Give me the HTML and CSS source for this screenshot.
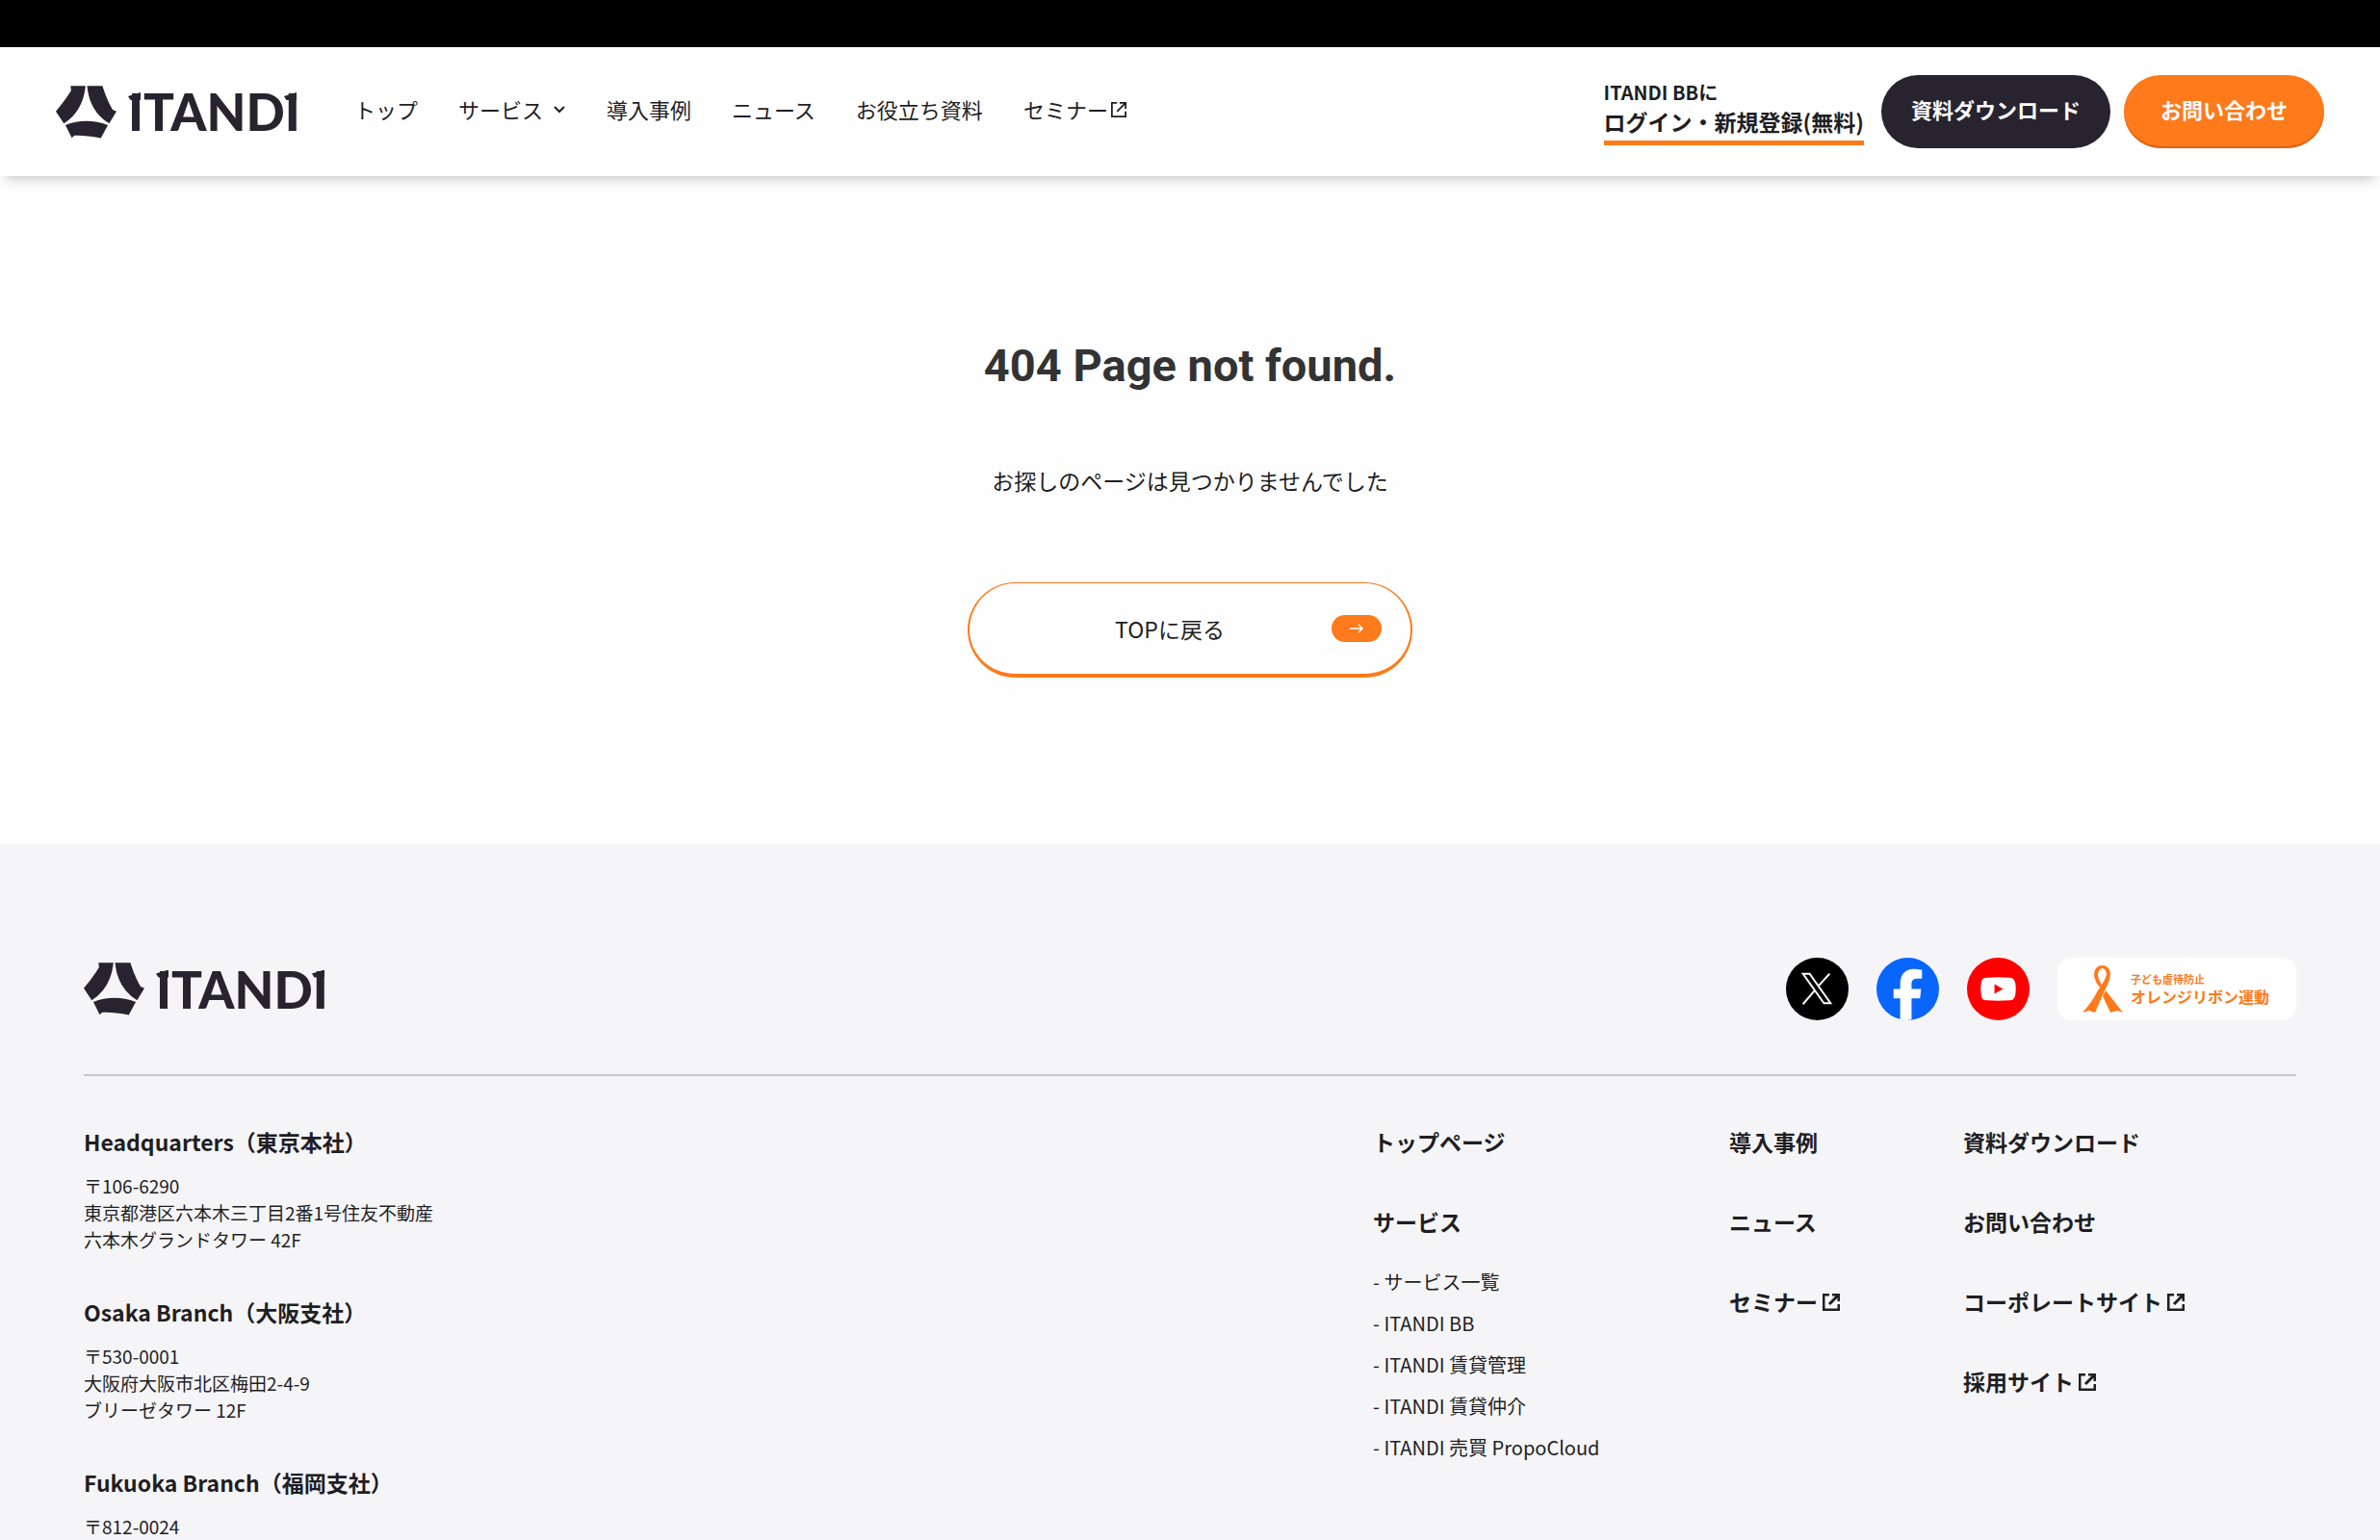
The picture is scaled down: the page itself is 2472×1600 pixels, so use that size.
FILE: index.html
```html
<!DOCTYPE html>
<html lang="ja">
<head>
    <meta charset="UTF-8">
    <meta name="viewport" content="width=device-width, initial-scale=1.0">
    <title>404 Page not found. | ITANDI</title>
    <link rel="stylesheet" href="styles.css">
</head>
<body>
    <svg class="sprite" aria-hidden="true">
        <symbol id="logo-mark" viewBox="0 0 190 165">
            <path d="M46 0H93Q85 80 25 118L0 80Q30 45 48 15Z"/>
            <path d="M98 0H146Q160 45 178 75L190 80L167 118Q105 80 98 0Z"/>
            <path d="M30 123Q95 98 163 123L141 164Q90 154 58 156L50 163Z"/>
        </symbol>
        <symbol id="icon-external" viewBox="0 0 18 18">
            <path d="M7 1H1V17H17V11M10 1H17V8M17 1L7 11" fill="none" stroke="currentColor"/>
        </symbol>
    </svg>

    <div class="topbar"></div>

    <header class="header">
        <a href="#" class="logo">
            <svg class="logo-mark"><use href="#logo-mark"/></svg>
            <span class="logo-text">ITANDI</span>
        </a>
        <nav class="nav">
            <a href="#">トップ</a>
            <a href="#">サービス
                <svg class="chevron" viewBox="0 0 14 8"><path d="M2 1L7 6L12 1"/></svg>
            </a>
            <a href="#">導入事例</a>
            <a href="#">ニュース</a>
            <a href="#">お役立ち資料</a>
            <a href="#">セミナー<svg class="external"><use href="#icon-external"/></svg></a>
        </nav>
        <div class="header-actions">
            <a href="#" class="login">
                <small>ITANDI BBに</small>
                <span>ログイン・新規登録(無料)</span>
            </a>
            <a href="#" class="btn btn-dark">資料ダウンロード</a>
            <a href="#" class="btn btn-orange">お問い合わせ</a>
        </div>
    </header>

    <main class="main">
        <h1>404 Page not found.</h1>
        <p>お探しのページは見つかりませんでした</p>
        <a href="#" class="btn-back">
            <span class="btn-back-text">TOPに戻る</span>
            <span class="btn-back-arrow">
                <svg viewBox="0 0 16 12"><path d="M1 6H14M10 2L14 6L10 10"/></svg>
            </span>
        </a>
    </main>

    <footer class="footer">
        <div class="footer-top">
            <a href="#" class="logo">
                <svg class="logo-mark"><use href="#logo-mark"/></svg>
                <span class="logo-text">ITANDI</span>
            </a>
            <div class="social">
                <a href="#" aria-label="X">
                    <svg viewBox="0 0 66 66">
                        <circle cx="33" cy="33" r="33" fill="#000"/>
                        <path d="M18 17H25L47 48H40Z" fill="none" stroke="#fff" stroke-width="2"/>
                        <path d="M46 17L34 30M30 35L18 49" stroke="#fff" stroke-width="2"/>
                    </svg>
                </a>
                <a href="#" aria-label="Facebook">
                    <svg viewBox="0 0 66 66">
                        <circle cx="33" cy="33" r="33" fill="#0866ff"/>
                        <path d="M25 65V43H18V33H25V28C25 17 31 11 41 12L48 13V22H43C38 22 37 25 37 28V33H47L46 43H37V65Q31 67 25 65Z" fill="#fff"/>
                    </svg>
                </a>
                <a href="#" aria-label="YouTube">
                    <svg viewBox="0 0 66 66">
                        <circle cx="33" cy="33" r="33" fill="#f00"/>
                        <path d="M21 21Q33 20 45 21Q50 21 51 27Q52 33 51 39Q50 45 45 45Q33 46 21 45Q15 45 15 39Q14 33 15 27Q15 21 21 21Z" fill="#fff"/>
                        <path d="M29 28L38 33L29 38Z" fill="#f00"/>
                    </svg>
                </a>
                <a href="#" class="ribbon">
                    <svg class="ribbon-icon" viewBox="0 0 42 50">
                        <path d="M12 9Q13 0 20.5 0Q28 0 29 9H25Q24 3 20.5 3Q17 3 16 9Z"/>
                        <path d="M29 9Q29 15 23 26L13 49L7 47L0 49Q10 38 16 26Q25 13 25 9Z"/>
                        <path d="M12 9Q12 16 18 23L20 20Q16 14 16 9Z"/>
                        <path d="M24 26L42 49L36 47L29 49L21 32Z"/>
                    </svg>
                    <span class="ribbon-text">
                        <small>子ども虐待防止</small>
                        <span>オレンジリボン運動</span>
                    </span>
                </a>
            </div>
        </div>

        <div class="footer-main">
            <div class="offices">
                <section>
                    <h2>Headquarters（東京本社）</h2>
                    <address>〒106-6290<br>東京都港区六本木三丁目2番1号住友不動産<br>六本木グランドタワー 42F</address>
                </section>
                <section>
                    <h2>Osaka Branch（大阪支社）</h2>
                    <address>〒530-0001<br>大阪府大阪市北区梅田2-4-9<br>ブリーゼタワー 12F</address>
                </section>
                <section>
                    <h2>Fukuoka Branch（福岡支社）</h2>
                    <address>〒812-0024</address>
                </section>
            </div>
            <nav class="footer-nav">
                <div class="footer-col footer-col-wide">
                    <a href="#">トップページ</a>
                    <div>
                        <a href="#">サービス</a>
                        <ul>
                            <li><a href="#">- サービス一覧</a></li>
                            <li><a href="#">- ITANDI BB</a></li>
                            <li><a href="#">- ITANDI 賃貸管理</a></li>
                            <li><a href="#">- ITANDI 賃貸仲介</a></li>
                            <li><a href="#">- ITANDI 売買 PropoCloud</a></li>
                        </ul>
                    </div>
                </div>
                <div class="footer-col">
                    <a href="#">導入事例</a>
                    <a href="#">ニュース</a>
                    <a href="#">セミナー<svg class="external"><use href="#icon-external"/></svg></a>
                </div>
                <div class="footer-col">
                    <a href="#">資料ダウンロード</a>
                    <a href="#">お問い合わせ</a>
                    <a href="#">コーポレートサイト<svg class="external"><use href="#icon-external"/></svg></a>
                    <a href="#">採用サイト<svg class="external"><use href="#icon-external"/></svg></a>
                </div>
            </nav>
        </div>
    </footer>
</body>
</html>
```
FILE: styles.css
```css
* {
    box-sizing: border-box;
}
body {
    margin: 0;
    font-family: "Noto Sans CJK JP", sans-serif;
    color: #1f1e24;
    background-color: #fefefe;
}
a {
    color: inherit;
    text-decoration: none;
}
.sprite {
    display: none;
}
.topbar {
    height: 49px;
    background-color: #000;
}

/* header */
.header {
    display: flex;
    align-items: center;
    height: 134px;
    padding: 0 58px;
    background-color: #fff;
    box-shadow: 0 8px 12px -6px rgba(0, 0, 0, 0.25);
}
.logo {
    display: flex;
    align-items: center;
    gap: 12px;
    color: #28242f;
}
.logo-mark {
    width: 63px;
    height: 55px;
    fill: currentColor;
}
.logo-text {
    position: relative;
    font-family: Lato, sans-serif;
    font-size: 53px;
    font-weight: 900;
    line-height: 56px;
}
/* slanted caps on the first and last I */
.logo-text::before,
.logo-text::after {
    content: "";
    position: absolute;
    top: 8px;
    left: 0;
    width: 13px;
    height: 8px;
    background-color: currentColor;
    clip-path: polygon(100% 0, 100% 100%, 20% 100%, 0 50%);
}
.logo-text::after {
    right: 4px;
    left: auto;
}
.nav {
    display: flex;
    gap: 42px;
    margin-left: 56px;
    font-size: 22px;
    line-height: 32px;
    padding-bottom: 6px;
}
.nav a {
    display: flex;
    align-items: center;
}
.chevron {
    width: 14px;
    height: 8px;
    margin-top: 2px;
    margin-left: 10px;
    fill: none;
    stroke: currentColor;
    stroke-width: 2;
}
.external {
    width: 18px;
    height: 18px;
    margin-top: 2px;
    margin-left: 5px;
    stroke-width: 3;
}
.nav .external {
    width: 16px;
    height: 16px;
    margin-left: 3px;
    stroke-width: 2;
}
.header-actions {
    display: flex;
    align-items: center;
    gap: 14px;
    margin-left: auto;
}
.login {
    margin-right: 4px;
    padding-bottom: 4px;
    border-bottom: 5px solid #ff7a1a;
    font-weight: bold;
    font-size: 23px;
    line-height: 32px;
}
.login small,
.login span {
    display: block;
}
.login small {
    font-size: 20px;
    line-height: 28px;
}
.btn {
    height: 76px;
    padding: 0 31px;
    border-radius: 38px;
    color: #fff;
    font-size: 22px;
    font-weight: bold;
    line-height: 70px;
}
.btn-dark {
    background-color: #28242f;
}
.btn-orange {
    padding: 0 38px;
    background-color: #ff7a1a;
    box-shadow: inset 0 -2px 0 #d9641a;
}

/* main */
.main {
    display: flex;
    flex-direction: column;
    align-items: center;
    padding: 162px 0 173px;
}
.main h1 {
    margin: 0;
    color: #333;
    font-family: Roboto, sans-serif;
    font-size: 47px;
    line-height: 70px;
}
.main p {
    margin: 66px 0 88px;
    font-size: 23px;
    line-height: 36px;
}
.btn-back {
    display: flex;
    align-items: center;
    width: 462px;
    height: 99px;
    padding: 0 30px;
    border: 2px solid #ff7a1a;
    border-top-width: 1px;
    border-bottom-width: 4px;
    border-radius: 50px;
    font-size: 23px;
}
.btn-back-text {
    flex: 1;
    padding-left: 10px;
    text-align: center;
}
.btn-back-arrow {
    display: flex;
    align-items: center;
    justify-content: center;
    width: 52px;
    height: 28px;
    border-radius: 14px;
    background-color: #ff7a1a;
}
.btn-back-arrow svg {
    width: 16px;
    height: 12px;
    fill: none;
    stroke: #fff;
    stroke-width: 1.5;
}

/* footer */
.footer {
    padding: 118px 87px 80px;
    background-color: #f5f5f8;
}
.footer-top {
    display: flex;
    align-items: center;
    justify-content: space-between;
    padding-bottom: 56px;
    border-bottom: 2px solid #c8c8cb;
}
.social {
    display: flex;
    gap: 29px;
}
.social svg {
    display: block;
    width: 65px;
    height: 65px;
}
.ribbon {
    display: flex;
    align-items: center;
    gap: 8px;
    width: 248px;
    padding-left: 26px;
    border-radius: 14px;
    background-color: #fff;
    color: #ff7a1a;
    font-weight: bold;
}
.social .ribbon-icon {
    width: 42px;
    height: 50px;
    fill: currentColor;
}
.ribbon-text {
    padding-bottom: 3px;
}
.ribbon-text small,
.ribbon-text span {
    display: block;
    font-size: 16px;
    line-height: 18px;
}
.ribbon-text small {
    font-size: 11px;
}
.footer-main {
    display: flex;
    justify-content: space-between;
    padding-top: 51px;
}
.offices section {
    margin-bottom: 44px;
}
.offices h2 {
    margin: 0 0 15px;
    font-size: 23px;
    line-height: 34px;
}
.offices address {
    font-size: 19px;
    font-style: normal;
    line-height: 28px;
}
.footer-nav {
    display: flex;
    gap: 128px;
    padding-right: 116px;
}
.footer-col {
    display: flex;
    flex-direction: column;
    gap: 49px;
    font-size: 23px;
    font-weight: bold;
    line-height: 34px;
}
.footer-col-wide {
    min-width: 242px;
}
.footer-col > a {
    display: flex;
    align-items: center;
}
.footer-col ul {
    margin: 32px 0 0;
    padding: 0;
    list-style: none;
    font-size: 20px;
    font-weight: normal;
    line-height: 28px;
}
.footer-col li {
    margin-bottom: 15px;
}
```
